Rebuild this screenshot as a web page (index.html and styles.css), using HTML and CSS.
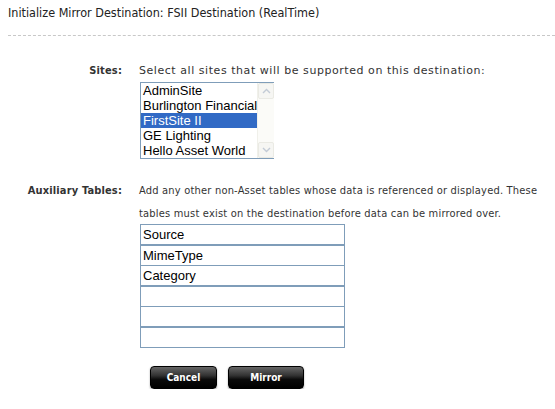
FILE: index.html
```html
<!DOCTYPE html>
<html>
<head>
<meta charset="utf-8">
<link rel="stylesheet" href="styles.css">
</head>
<body>
<div class="page">
  <h1 class="title">Initialize Mirror Destination: FSII Destination (RealTime)</h1>
  <div class="rule"></div>

  <div class="row row-sites">
    <div class="label">Sites:</div>
    <div class="field">
      <div class="help help-sites">Select all sites that will be supported on this destination:</div>
      <div class="listbox">
        <ul class="options">
          <li>AdminSite</li>
          <li>Burlington Financial</li>
          <li class="selected">FirstSite II</li>
          <li>GE Lighting</li>
          <li>Hello Asset World</li>
        </ul>
        <div class="scrollbar">
          <div class="sb-btn"><svg width="9" height="6" viewBox="0 0 9 6"><path d="M1 5 L4.5 1.5 L8 5" fill="none" stroke="#c3cbd6" stroke-width="1.4"/></svg></div>
          <div class="sb-track"></div>
          <div class="sb-btn"><svg width="9" height="6" viewBox="0 0 9 6"><path d="M1 1 L4.5 4.5 L8 1" fill="none" stroke="#c3cbd6" stroke-width="1.4"/></svg></div>
        </div>
      </div>
    </div>
  </div>

  <div class="row row-aux">
    <div class="label">Auxiliary Tables:</div>
    <div class="field">
      <div class="help help-wrap">Add any other non-Asset tables whose data is referenced or displayed. These tables must exist on the destination before data can be mirrored over.</div>
      <div class="inputs">
        <input class="text" type="text" value="Source">
        <input class="text" type="text" value="MimeType">
        <input class="text" type="text" value="Category">
        <input class="text" type="text" value="">
        <input class="text" type="text" value="">
        <input class="text" type="text" value="">
      </div>
    </div>
  </div>

  <div class="buttons">
    <button class="btn btn-cancel">Cancel</button>
    <button class="btn btn-mirror">Mirror</button>
  </div>
</div>
</body>
</html>
```

FILE: styles.css
```css
html, body {
  margin: 0;
  padding: 0;
  background: #ffffff;
}

.page {
  padding: 5px 0 0 8px;
  font-family: "DejaVu Sans Condensed", "DejaVu Sans", sans-serif;
  color: #333333;
}

.title {
  margin: 0;
  font-size: 12.5px;
  font-weight: normal;
  color: #222222;
  line-height: 15px;
  height: 15px;
}

.rule {
  margin-top: 15px;
  border-top: 1px dashed #c8c8c8;
  height: 0;
}

.row {
  display: flex;
  align-items: flex-start;
}

.row-sites {
  margin-top: 27px;
}

.row-aux {
  margin-top: 24px;
}

.label {
  width: 114px;
  text-align: right;
  font-size: 11px;
  font-weight: bold;
  letter-spacing: 0.15px;
  color: #333333;
  line-height: 15px;
  padding-right: 17px;
  flex: none;
}

.field {
  display: flex;
  flex-direction: column;
  align-items: flex-start;
}

.help {
  font-size: 11px;
  line-height: 15px;
  color: #333333;
}

.help-sites {
  font-family: "DejaVu Sans", sans-serif;
  font-size: 11px;
  letter-spacing: 0.55px;
}

.help-wrap {
  width: 412px;
  line-height: 23px;
  letter-spacing: 0.2px;
  margin-top: -4px;
  margin-bottom: -1px;
}

.listbox {
  margin-top: 4px;
  margin-left: 1px;
  width: 132px;
  height: 75px;
  border: 1px solid #7f9db9;
  display: flex;
  background: #fff;
}

.options {
  list-style: none;
  margin: 0;
  padding: 0;
  flex: 1;
  font-family: "Liberation Sans", Arial, sans-serif;
  font-size: 13px;
  color: #000;
}

.options li {
  height: 15px;
  line-height: 15px;
  padding-left: 2px;
  white-space: nowrap;
}

.options li.selected {
  background: #316ac5;
  color: #ffffff;
}

.scrollbar {
  width: 16px;
  flex: none;
  display: flex;
  flex-direction: column;
  background: #fbfbf8;
  border-left: 1px solid #f0f0ea;
}

.sb-btn {
  height: 16px;
  display: flex;
  align-items: center;
  justify-content: center;
  background: #f6f6f3;
  border: 1px solid #eaeae4;
  box-sizing: border-box;
  border-radius: 2px;
}

.sb-track {
  flex: 1;
}

.inputs {
  margin-top: 0;
  margin-left: 1px;
  display: flex;
  flex-direction: column;
}

.text {
  box-sizing: border-box;
  width: 205px;
  height: 21px;
  margin: 0 0 -0.5px 0;
  border: 1px solid #7f9db9;
  padding: 0 2px;
  font-family: "Liberation Sans", Arial, sans-serif;
  font-size: 13px;
  color: #000;
  background: #fff;
  outline: none;
}

.buttons {
  display: flex;
  gap: 11px;
  padding-left: 142px;
  margin-top: 19px;
}

.btn {
  height: 23px;
  border: 1px solid #000;
  border-radius: 4px;
  background: linear-gradient(#666666 0%, #333333 40%, #0a0a0a 60%, #000 100%);
  color: #ffffff;
  font-family: "DejaVu Sans Condensed", "DejaVu Sans", sans-serif;
  font-size: 10px;
  font-weight: bold;
  padding: 0;
  box-shadow: 0 1px 2px rgba(0,0,0,0.35);
}

.btn-cancel {
  width: 67px;
}

.btn-mirror {
  width: 76px;
}
```
